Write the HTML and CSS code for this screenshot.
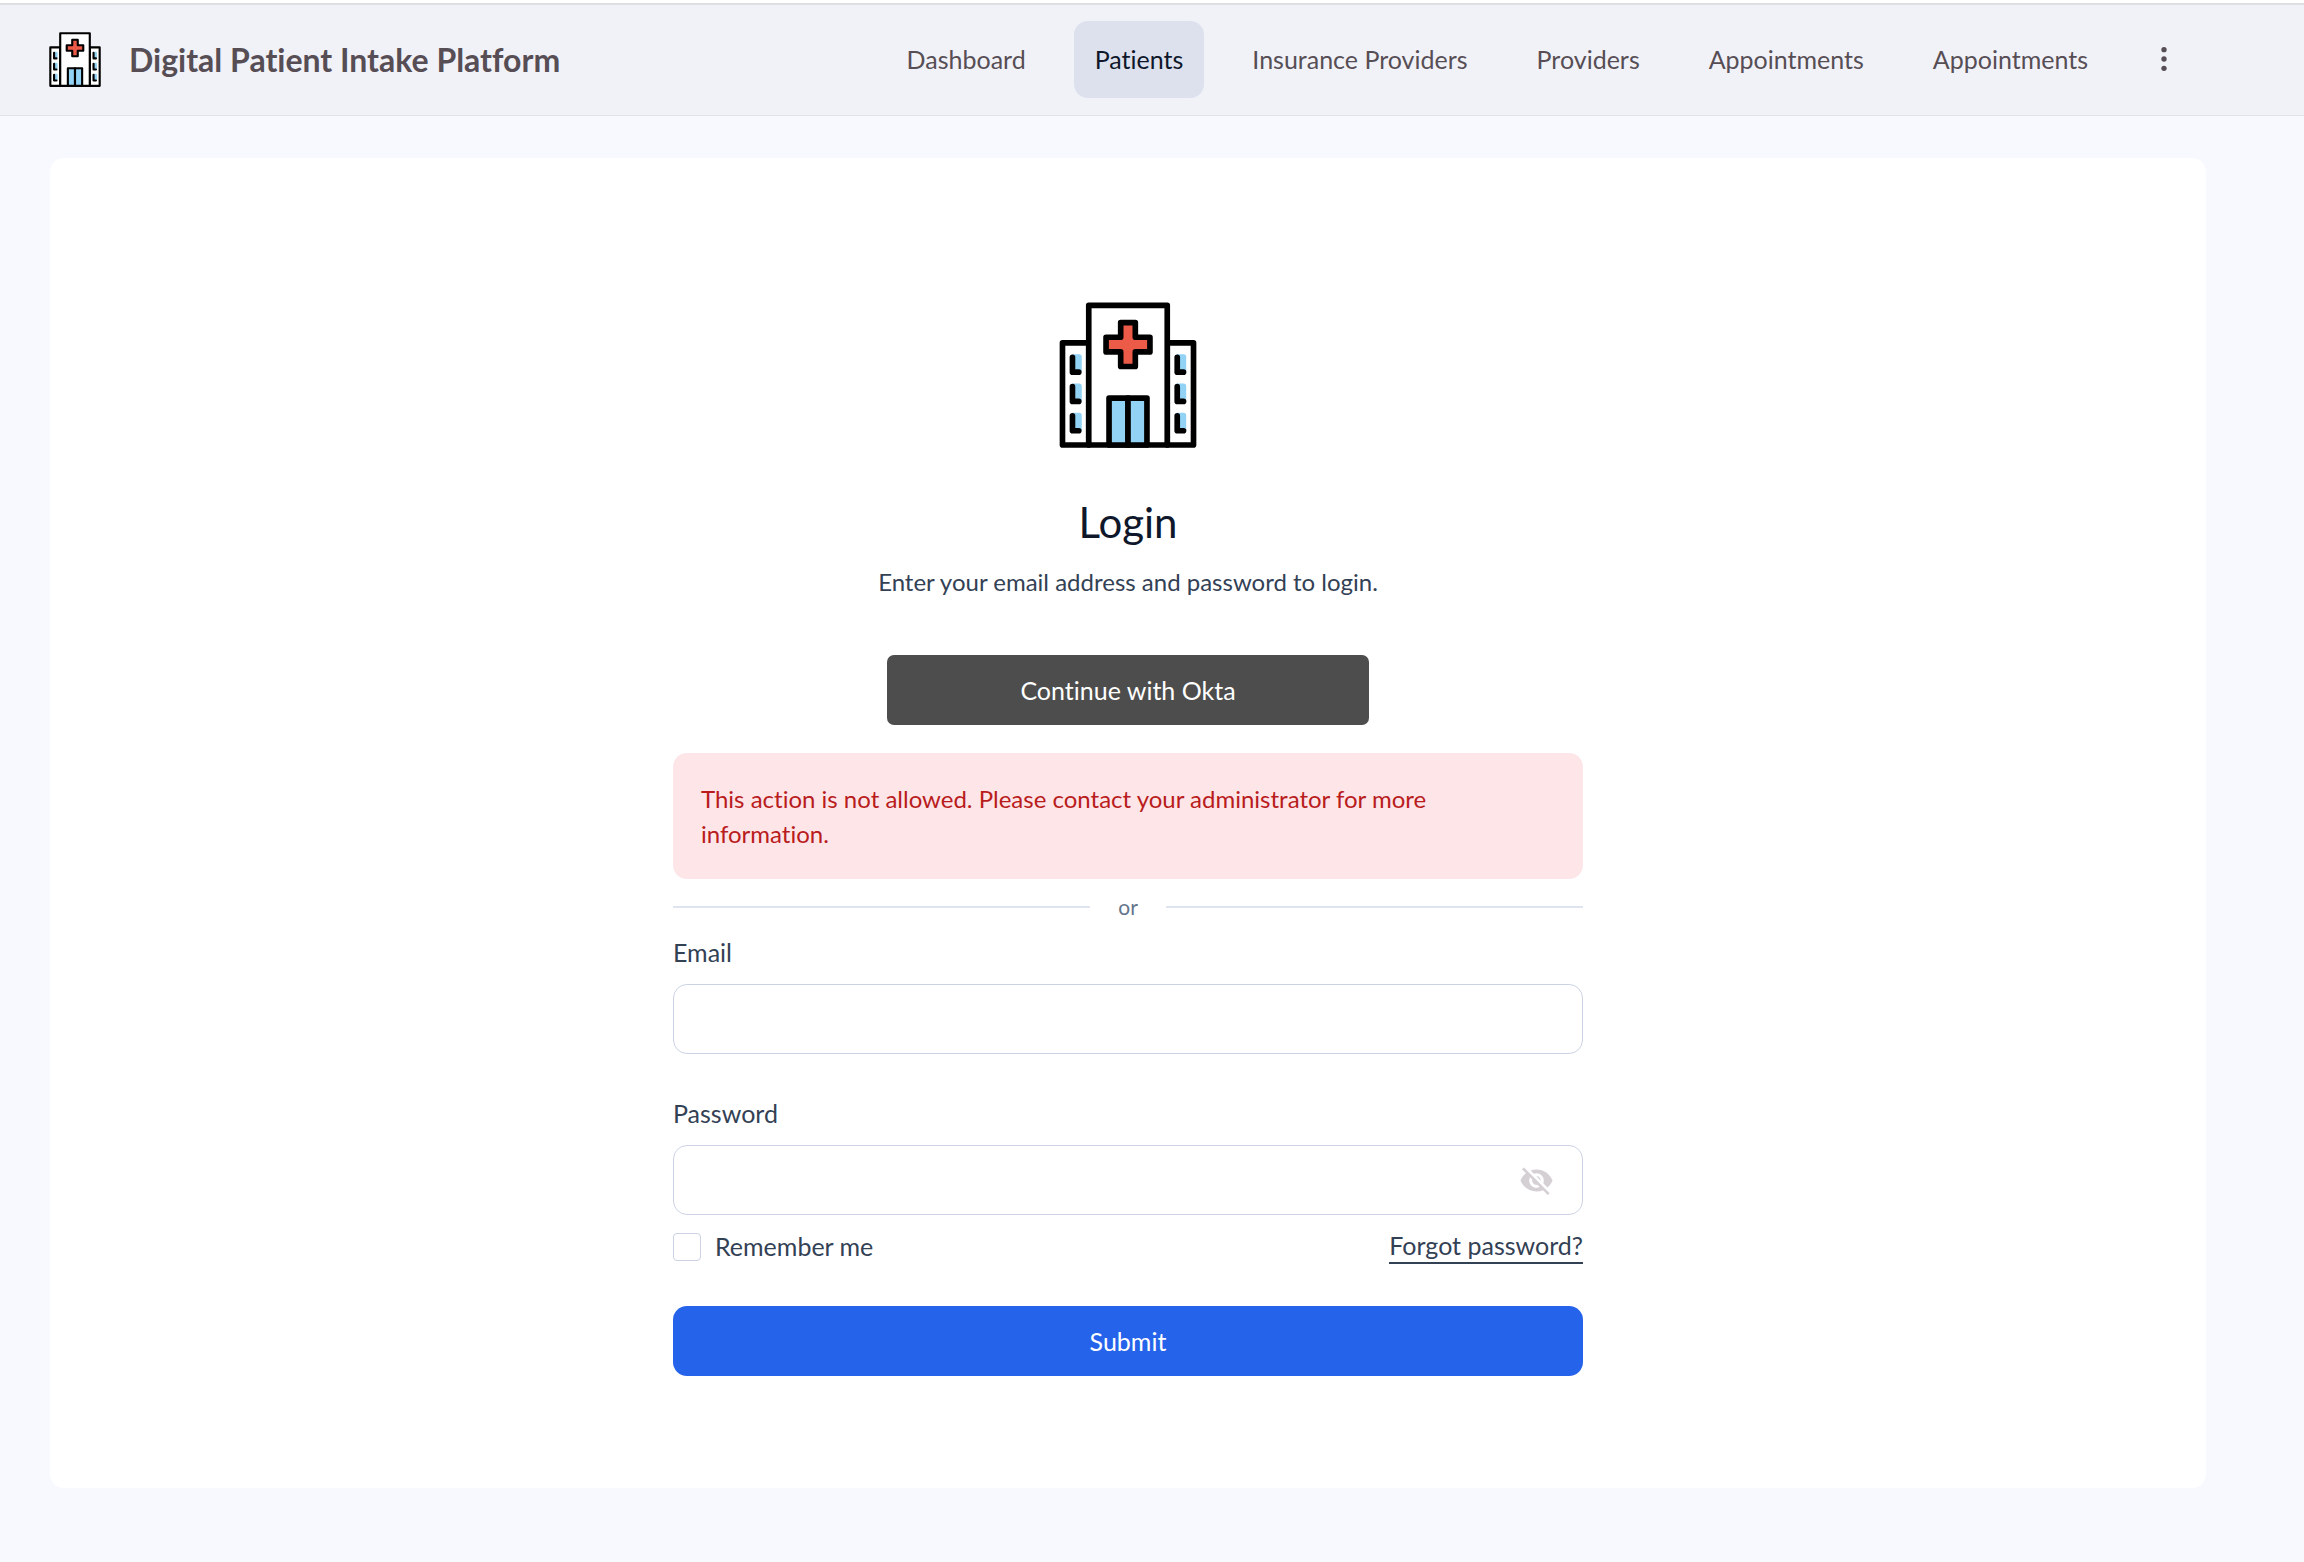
FILE: index.html
```html
<!DOCTYPE html>
<html lang="en">
<head>
  <meta charset="utf-8">
  <title>Digital Patient Intake Platform</title>
  <link rel="stylesheet" href="styles.css">
</head>
<body>

<svg class="defs" width="0" height="0" aria-hidden="true">
  <symbol id="hospital" viewBox="58 65 412 439">
    <g fill="#fff" stroke="#000" stroke-width="17" stroke-linejoin="round">
      <path d="M67 188h79v307H67z"/>
      <path d="M382 188h79v307h-79z"/>
      <path d="M146 75h236v420H146z"/>
      <path fill="#91d2f5" d="M207 354h57v141h-57z"/>
      <path fill="#91d2f5" d="M264 354h57v141h-57z"/>
      <path fill="#ec5b48" d="M242 127h44v44h44v44h-44v44h-44v-44h-44v-44h44z"/>
    </g>
    <g fill="#91d2f5">
      <path d="M97 222h20q8 0 8 8v46H97zM97 310h20q8 0 8 8v46H97zM97 398h20q8 0 8 8v46H97z"/>
      <path d="M411 222h20q8 0 8 8v46h-28zM411 310h20q8 0 8 8v46h-28zM411 398h20q8 0 8 8v46h-28z"/>
    </g>
    <g fill="none" stroke="#000" stroke-width="17" stroke-linecap="round" stroke-linejoin="round">
      <path d="M97 231v45h19M97 319v45h19M97 407v45h19"/>
      <path d="M412 231v45h19M412 319v45h19M412 407v45h19"/>
    </g>
  </symbol>
</svg>

<header class="header">
  <a class="brand" href="#">
    <svg class="brand-logo" aria-hidden="true"><use href="#hospital"/></svg>
    <span>Digital Patient Intake Platform</span>
  </a>
  <nav class="nav">
    <a href="#">Dashboard</a>
    <a href="#" class="active">Patients</a>
    <a href="#">Insurance Providers</a>
    <a href="#">Providers</a>
    <a href="#">Appointments</a>
    <a href="#">Appointments</a>
    <button type="button" class="more" aria-label="More">
      <svg viewBox="0 0 24 24" aria-hidden="true">
        <circle cx="12" cy="5" r="2"/><circle cx="12" cy="12" r="2"/><circle cx="12" cy="19" r="2"/>
      </svg>
    </button>
  </nav>
</header>

<main class="card">
  <form class="login">
    <svg class="login-logo" aria-hidden="true"><use href="#hospital"/></svg>
    <h1>Login</h1>
    <p class="intro">Enter your email address and password to login.</p>
    <button type="button" class="btn btn-okta">Continue with Okta</button>
    <div class="alert" role="alert">This action is not allowed. Please contact your administrator for more information.</div>
    <div class="divider">or</div>

    <div class="field">
      <label for="email">Email</label>
      <input type="email" id="email" class="box">
    </div>

    <div class="field">
      <label for="password">Password</label>
      <div class="box box-icon">
        <input type="password" id="password">
        <button type="button" class="toggle" aria-label="Show password">
          <svg viewBox="0 0 24 24" aria-hidden="true"><path d="M12 7c2.76 0 5 2.24 5 5 0 .65-.13 1.26-.36 1.83l2.92 2.92c1.51-1.26 2.7-2.89 3.43-4.75-1.73-4.39-6-7.5-11-7.5-1.4 0-2.74.25-3.98.7l2.16 2.16C10.74 7.13 11.35 7 12 7zM2 4.27l2.28 2.28.46.46C3.08 8.3 1.78 10.02 1 12c1.73 4.39 6 7.5 11 7.5 1.55 0 3.03-.3 4.38-.84l.42.42L19.73 22 21 20.73 3.27 3 2 4.27zM7.53 9.8l1.55 1.55c-.05.21-.08.43-.08.65 0 1.66 1.34 3 3 3 .22 0 .44-.03.65-.08l1.55 1.55c-.67.33-1.41.53-2.2.53-2.76 0-5-2.24-5-5 0-.79.2-1.53.53-2.2zm4.31-.78l3.15 3.15.02-.16c0-1.66-1.34-3-3-3l-.17.01z"/></svg>
        </button>
      </div>
    </div>

    <div class="options">
      <label class="remember"><input type="checkbox" name="remember">Remember me</label>
      <a class="forgot" href="#">Forgot password?</a>
    </div>

    <button type="submit" class="btn btn-submit">Submit</button>
  </form>
</main>

</body>
</html>
```
FILE: styles.css
```css
* { box-sizing: border-box; }

body {
  margin: 0;
  border-top: 3px solid #fff;
  background: #f8f9fe;
  color: #334155;
  font: 25px/35px Lato, "Open Sans", sans-serif;
  font-variant-ligatures: none;
}

a { color: inherit; text-decoration: none; }
button, input { font: inherit; font-variant-ligatures: none; }
button { border: 0; padding: 0; cursor: pointer; }
svg { display: block; }
.defs { position: absolute; }

/* header */
.header {
  display: flex;
  align-items: center;
  justify-content: space-between;
  height: 113px;
  padding: 0 112px 2px 49px;
  border-top: 2px solid #dedfe2;
  border-bottom: 1px solid #dfe1e8;
  background: #f1f2f8;
  color: #574e55;
}
.brand {
  display: flex;
  align-items: center;
  gap: 28px;
  font-size: 32px;
  font-weight: 700;
}
.brand-logo { width: 52px; height: 55px; }

.nav { display: flex; align-items: center; gap: 27px; }
.nav a { padding: 21px; border-radius: 14px; }
.nav .active { background: #dde1ee; color: #0f172a; }
.more {
  display: flex;
  align-items: center;
  justify-content: center;
  width: 56px;
  height: 56px;
  background: none;
  color: inherit;
}
.more svg { width: 32px; height: 32px; fill: currentColor; }

/* login card */
.card {
  margin: 42px 98px 73px 50px;
  padding: 144px 28px 112px;
  border-radius: 14px;
  background: #fff;
}
.login {
  display: flex;
  flex-direction: column;
  max-width: 910px;
  margin: 0 auto;
}
.login-logo { align-self: center; width: 138px; height: 146px; }
h1 {
  margin: 46px 0 14px;
  color: #0f172a;
  font-size: 42px;
  font-weight: 400;
  line-height: 56px;
  text-align: center;
}
.intro { margin: 0 0 56px; font-size: 24px; text-align: center; }

.btn { height: 70px; color: #fff; }
.btn-okta {
  align-self: center;
  width: 482px;
  border-radius: 7px;
  background: #4d4d4d;
}
.btn-submit {
  margin-top: 42px;
  border-radius: 14px;
  background: #2563eb;
}

.alert {
  margin: 28px 0 14px;
  padding: 28px;
  border-radius: 14px;
  background: #fee5e8;
  color: #b91c1c;
  font-size: 24px;
}

.divider {
  display: flex;
  align-items: center;
  gap: 28px;
  margin-bottom: 14px;
  color: #64748b;
  font-size: 21px;
  line-height: 28px;
}
.divider::before, .divider::after {
  content: "";
  flex: 1;
  height: 2px;
  background: #e0e3f0;
}

.field { display: flex; flex-direction: column; gap: 14px; }
.field + .field { margin-top: 42px; }
.box {
  width: 100%;
  height: 70px;
  padding: 0 28px;
  border: 1px solid #cbd2e4;
  border-radius: 14px;
  background: #fff;
}
.box-icon { display: flex; align-items: center; }
.box-icon input {
  flex: 1;
  min-width: 0;
  border: 0;
  padding: 0;
  outline: 0;
  background: none;
}
.toggle { background: none; color: #d5d0d4; }
.toggle svg { width: 35px; height: 35px; fill: currentColor; }

.options {
  display: flex;
  justify-content: space-between;
  margin-top: 14px;
}
.remember { display: flex; align-items: center; gap: 14px; }
.remember input {
  appearance: none;
  width: 28px;
  height: 28px;
  margin: 0;
  border: 1px solid #cbd2e4;
  border-radius: 4px;
  background: #fff;
}
.remember input:checked { background: #2563eb; }
.forgot { border-bottom: 2px solid #334155; line-height: 33px; }
```
